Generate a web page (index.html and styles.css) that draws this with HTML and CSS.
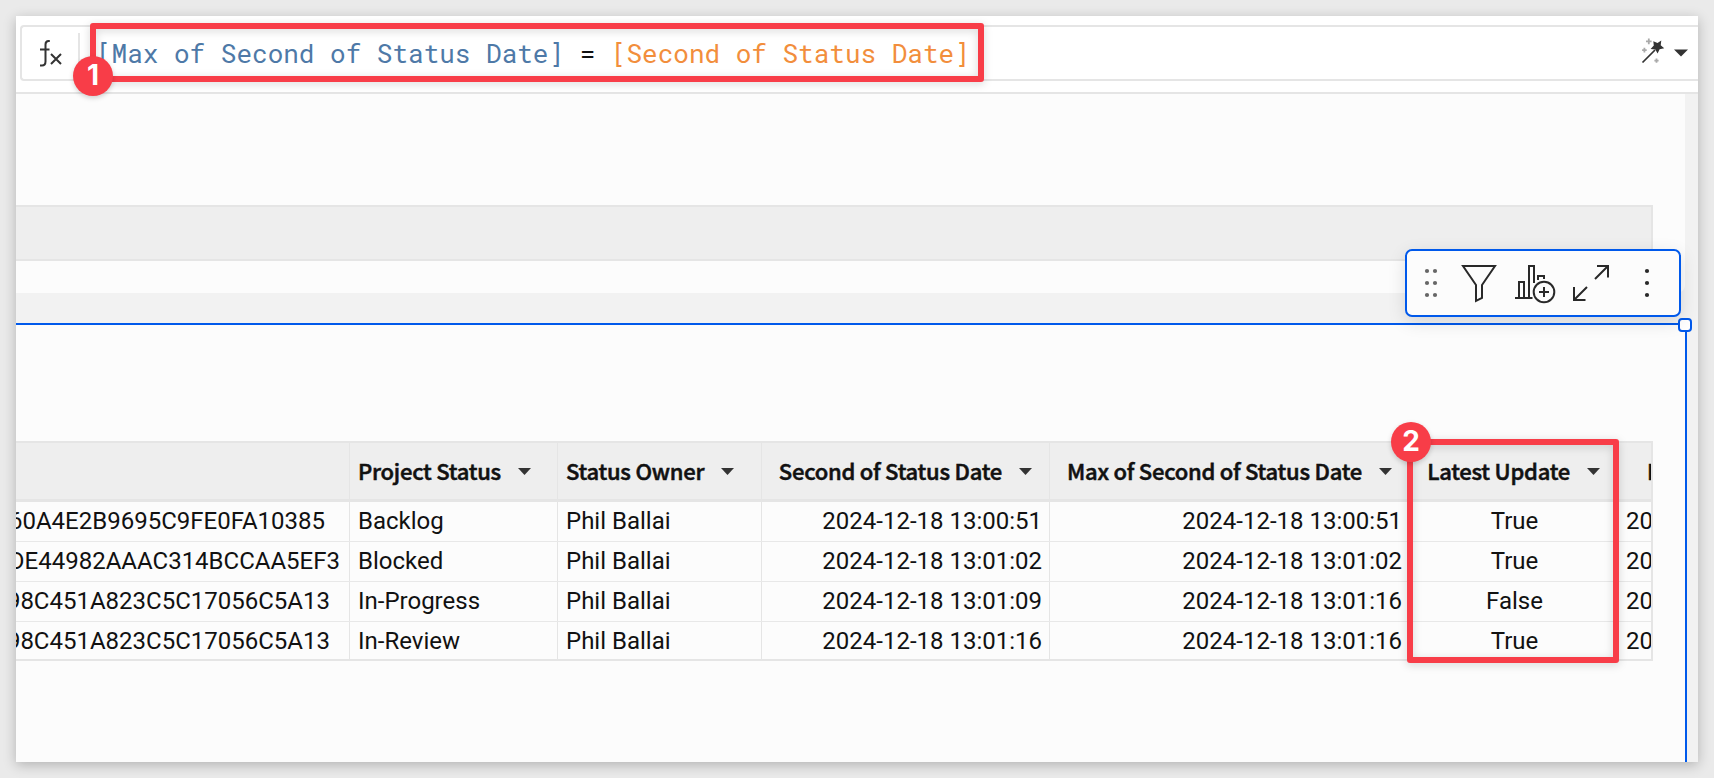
FILE: index.html
```
<!DOCTYPE html>
<html lang="en">
<head>
<meta charset="utf-8">
<title>Workbook</title>
<link rel="stylesheet" href="styles.css">
</head>
<body>
<main class="card">
  <header class="formula-bar">
    <div class="formula-box">
      <svg class="fx" width="24" height="28" viewBox="0 0 24 28" fill="none" stroke="#333" stroke-width="2"><path d="M10.800 2H9.500Q6.500 2 6.500 5.500V22.500Q6.500 26.500 3 26.500H1M1 10.500H10.500M12 15L22 25M22 15L12 25"/></svg>
      <span class="divider"></span>
      <code class="formula"><span class="ref-a">[Max of Second of Status Date]</span> = <span class="ref-b">[Second of Status Date]</span></code>
      <svg class="wand" width="24" height="26" viewBox="0 0 24 26"><path d="M1.500 24.500L14 12" stroke="#333" stroke-width="1.700"/><path d="M12.300 3.200L16.500 5L20.300 2.500L19.700 7.200L23.200 10.300L18.600 11.200L16.600 15.500L14.300 11.500L9.600 11L12.800 7.500Z" fill="#333"/><path d="M7.800 .6V6.200M5 3.400H10.600M3.400 9.800V14.400M1.100 12.100H5.700M15.500 20.600V24.800M13.400 22.700H17.600" stroke="#aaa" stroke-width="1.800"/></svg>
      <svg class="caret-lg" width="14" height="8" viewBox="0 0 14 8"><path d="M0 .5H14L7 7.500Z" fill="#333"/></svg>
    </div>
  </header>
  <section class="canvas">
    <div class="upper-panel"><div class="band"></div></div>
    <div class="element">
      <div class="table">
        <div class="row head">
          <div class="cell"></div>
          <div class="cell"><span>Project Status</span><svg class="caret" viewBox="0 0 13 7"><path d="M0 0H13L6.500 7Z"/></svg></div>
          <div class="cell"><span>Status Owner</span><svg class="caret" viewBox="0 0 13 7"><path d="M0 0H13L6.500 7Z"/></svg></div>
          <div class="cell end"><span>Second of Status Date</span><svg class="caret" viewBox="0 0 13 7"><path d="M0 0H13L6.500 7Z"/></svg></div>
          <div class="cell end max"><span>Max of Second of Status Date</span><svg class="caret" viewBox="0 0 13 7"><path d="M0 0H13L6.500 7Z"/></svg></div>
          <div class="cell end"><span>Latest Update</span><svg class="caret" viewBox="0 0 13 7"><path d="M0 0H13L6.500 7Z"/></svg></div>
          <div class="cell cut"><span>L</span></div>
        </div>
        <div class="row">
          <div class="cell hash h1">60A4E2B9695C9FE0FA10385</div><div class="cell">Backlog</div><div class="cell">Phil Ballai</div><div class="cell num">2024-12-18 13:00:51</div><div class="cell num max">2024-12-18 13:00:51</div><div class="cell mid">True</div><div class="cell">20</div>
        </div>
        <div class="row">
          <div class="cell hash h2">DE44982AAAC314BCCAA5EF3</div><div class="cell">Blocked</div><div class="cell">Phil Ballai</div><div class="cell num">2024-12-18 13:01:02</div><div class="cell num max">2024-12-18 13:01:02</div><div class="cell mid">True</div><div class="cell">20</div>
        </div>
        <div class="row">
          <div class="cell hash h3">98C451A823C5C17056C5A13</div><div class="cell">In-Progress</div><div class="cell">Phil Ballai</div><div class="cell num">2024-12-18 13:01:09</div><div class="cell num max">2024-12-18 13:01:16</div><div class="cell mid">False</div><div class="cell">20</div>
        </div>
        <div class="row">
          <div class="cell hash h3">98C451A823C5C17056C5A13</div><div class="cell">In-Review</div><div class="cell">Phil Ballai</div><div class="cell num">2024-12-18 13:01:16</div><div class="cell num max">2024-12-18 13:01:16</div><div class="cell mid">True</div><div class="cell">20</div>
        </div>
      </div>
    </div>
  </section>
</main>
<div class="handle"></div>
<div class="toolbar">
  <svg width="276" height="68" viewBox="0 0 276 68" fill="none" stroke="#292929" stroke-width="2">
    <g fill="#666" stroke="none"><circle cx="22" cy="22" r="2.100"/><circle cx="30" cy="22" r="2.100"/><circle cx="22" cy="34" r="2.100"/><circle cx="30" cy="34" r="2.100"/><circle cx="22" cy="46" r="2.100"/><circle cx="30" cy="46" r="2.100"/></g>
    <path d="M58 17H90L77 36V49L71 52V36Z"/>
    <path d="M110 49H127.500M114 49V33H119V49M124 49V17H129V34M133 31V27H139V30"/>
    <circle cx="139" cy="43" r="10.300"/><path d="M134 43H144M139 38V48"/>
    <path d="M192 17H203V28.500M203 17L190 30M169 38V51H180.500M169 51L182 38"/>
    <g fill="#292929" stroke="none"><circle cx="242" cy="22" r="2.100"/><circle cx="242" cy="34" r="2.100"/><circle cx="242" cy="46" r="2.100"/></g>
  </svg>
</div>
<div class="callout c1"></div><div class="badge b1">1</div>
<div class="callout c2"></div><div class="badge b2">2</div>
</body>
</html>
```
FILE: styles.css
```
* { box-sizing: border-box; }
body { margin: 0; padding: 16px; width: 1714px; height: 778px; overflow: hidden; background: #eaeaea; color: #111; font-family: Roboto, "Liberation Sans", sans-serif; position: relative; }
.card { width: 1682px; height: 746px; display: flex; flex-direction: column; overflow: hidden; background: #fff; box-shadow: 0 3px 12px rgba(0,0,0,.24); }
.formula-bar { height: 78px; flex: none; padding: 9px 0 0 4px; border-bottom: 2px solid #e5e5e5; }
.formula-box { height: 56px; display: flex; align-items: center; border: 2px solid #e5e5e5; border-right: 0; border-radius: 4px 0 0 4px; padding: 0 10px 0 17px; }
.fx { flex: none; }
.divider { width: 2px; height: 40px; margin: 0 16px 0 15px; background: #e5e5e5; }
.formula { flex: 1; white-space: pre; font: 26px/50px "Roboto Mono", "Liberation Mono", monospace; }
.ref-a { color: #4e79a7; }
.ref-b { color: #f28e3c; }
.wand { margin: 0 9px 4px 0; }
.canvas { flex: 1; display: flex; flex-direction: column; background: #f2f2f2; }
.upper-panel { width: 1669px; height: 199px; flex: none; padding-top: 111px; background: #fcfcfc; border-radius: 0 0 8px 0; }
.band { width: 1637px; height: 56px; background: #eee; border: 2px solid #e5e5e5; border-left: 0; }
.element { width: 1671px; flex: 1; margin-top: 30px; padding-top: 116px; background: #fcfcfc; border: solid #0059eb; border-width: 2px 2px 0 0; }
.table { width: 1637px; height: 220px; overflow: hidden; border: 2px solid #e5e5e5; border-left: 0; }
.row { display: grid; grid-template-columns: 334px 208px 204px 288px 362px 206px 33px; height: 40px; border-bottom: 1px solid #e8e8e8; font-size: 24px; line-height: 38px; }
.row:last-child { border-bottom: 0; }
.head { height: 59px; border-bottom: 3px solid #e5e5e5; background: #eee; font: 500 22px/56px "Source Sans Pro", "Noto Sans CJK SC", sans-serif; letter-spacing: -.24px; -webkit-text-stroke: .55px #111; }
.cell { overflow: hidden; white-space: nowrap; padding: 0 8px; border-right: 1px solid #e5e5e5; }
.cell:last-child { border-right: 0; }
.head .cell { display: flex; align-items: center; gap: 17px; }
.head span { margin-top: -3px; }
.head .end { justify-content: flex-end; padding-right: 17px; }
.head .end.max { padding-right: 19px; }
.head .cut { padding-left: 29px; }
.caret { width: 13px; height: 7px; flex: none; fill: #333; }
.hash { display: flex; justify-content: flex-end; }
.h1 { padding-right: 24px; }
.h2 { padding-right: 9px; }
.h3 { padding-right: 19px; }
.num { text-align: right; padding-right: 7px; }
.num.max { padding-right: 9px; }
.mid { text-align: center; }
.toolbar { position: absolute; left: 1405px; top: 249px; width: 276px; height: 68px; background: #fcfcfc; border: 2px solid #0059eb; border-radius: 7px; box-shadow: 0 5px 18px rgba(0,0,0,.12); }
.toolbar svg { display: block; margin: -2px; }
.handle { position: absolute; left: 1678px; top: 318px; width: 14px; height: 14px; background: #fff; border: 2px solid #0059eb; border-radius: 4px; }
.callout { position: absolute; border: 6px solid #f83d48; border-radius: 3px; filter: drop-shadow(0 2px 4px rgba(0,0,0,.16)); }
.c1 { left: 90px; top: 23px; width: 894px; height: 59px; }
.c2 { left: 1407px; top: 439px; width: 212px; height: 224px; }
.badge { position: absolute; width: 40px; height: 40px; border-radius: 50%; background: #f83d48; color: #fff; text-align: center; font: 700 28px/39px Inter, sans-serif; box-shadow: 0 2px 5px rgba(0,0,0,.18); }
.b1 { left: 73px; top: 56px; }
.b2 { left: 1391px; top: 422px; }
```
